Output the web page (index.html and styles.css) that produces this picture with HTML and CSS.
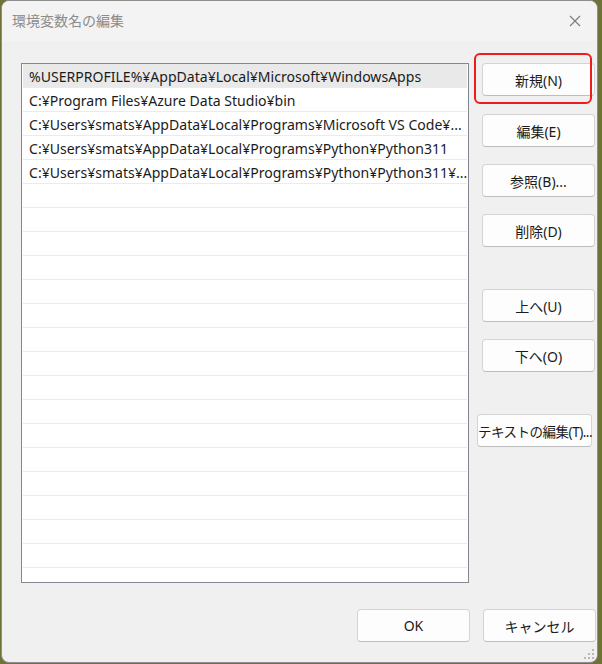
FILE: index.html
```html
<!DOCTYPE html>
<html lang="ja">
<head>
    <meta charset="UTF-8">
    <title>環境変数名の編集</title>
    <link rel="stylesheet" href="styles.css">
</head>
<body>
    <div class="window">
        <div class="titlebar">
            <span class="title">環境変数名の編集</span>
            <svg class="close" width="12" height="12" viewBox="0 0 12 12">
                <path d="M1 1 L11 11 M11 1 L1 11" stroke="#7a7a7a" stroke-width="1.1" fill="none"/>
            </svg>
        </div>

        <div class="content">
            <div class="list">
                <div class="row selected">%USERPROFILE%¥AppData¥Local¥Microsoft¥WindowsApps</div>
                <div class="row">C:¥Program Files¥Azure Data Studio¥bin</div>
                <div class="row">C:¥Users¥smats¥AppData¥Local¥Programs¥Microsoft VS Code¥...</div>
                <div class="row">C:¥Users¥smats¥AppData¥Local¥Programs¥Python¥Python311</div>
                <div class="row">C:¥Users¥smats¥AppData¥Local¥Programs¥Python¥Python311¥...</div>
                <div class="row"></div>
                <div class="row"></div>
                <div class="row"></div>
                <div class="row"></div>
                <div class="row"></div>
                <div class="row"></div>
                <div class="row"></div>
                <div class="row"></div>
                <div class="row"></div>
                <div class="row"></div>
                <div class="row"></div>
                <div class="row"></div>
                <div class="row"></div>
                <div class="row"></div>
                <div class="row"></div>
                <div class="row"></div>
                <div class="row"></div>
            </div>

            <div class="side">
                <div class="highlight-wrap">
                    <button class="btn">新規(N)</button>
                    <span class="highlight"></span>
                </div>
                <button class="btn">編集(E)</button>
                <button class="btn">参照(B)...</button>
                <button class="btn">削除(D)</button>
                <button class="btn group">上へ(U)</button>
                <button class="btn">下へ(O)</button>
                <button class="btn group wide">テキストの編集(T)...</button>
            </div>
        </div>

        <div class="footer">
            <button class="btn">OK</button>
            <button class="btn">キャンセル</button>
        </div>

        <svg class="grip" width="12" height="12" viewBox="0 0 12 12">
            <rect x="8" y="0" width="2" height="2" fill="#b8b8b8"/>
            <rect x="4" y="4" width="2" height="2" fill="#b8b8b8"/>
            <rect x="8" y="4" width="2" height="2" fill="#b8b8b8"/>
            <rect x="0" y="8" width="2" height="2" fill="#b8b8b8"/>
            <rect x="4" y="8" width="2" height="2" fill="#b8b8b8"/>
            <rect x="8" y="8" width="2" height="2" fill="#b8b8b8"/>
        </svg>
    </div>
</body>
</html>
```

FILE: styles.css
```css
body {
    margin: 0;
    width: 602px;
    height: 664px;
    background: #6f7236;
    font-family: "Noto Sans", "Noto Sans CJK JP", sans-serif;
    font-size: 14px;
    color: #1b1b1b;
    overflow: hidden;
}

.window {
    position: relative;
    box-sizing: border-box;
    width: 597px;
    height: 663px;
    margin-left: 1px;
    border: 1px solid #8e8e8e;
    border-radius: 8px;
    background: #f0f0f0;
    display: flex;
    flex-direction: column;
}

.titlebar {
    height: 40px;
    display: flex;
    align-items: center;
    justify-content: space-between;
    padding: 0 12px 0 10px;
    background: #f3f3f3;
    border-radius: 8px 8px 0 0;
}

.title {
    color: #8c8c8c;
    font-size: 14px;
    padding-bottom: 2px;
}

.close {
    margin-right: 4px;
}

.content {
    display: flex;
    padding: 22px 0 0 19px;
}

.list {
    box-sizing: border-box;
    width: 448px;
    height: 520px;
    border: 1px solid #828790;
    background: #fff;
    overflow: hidden;
}

.row {
    box-sizing: border-box;
    height: 24px;
    line-height: 25px;
    padding-left: 6px;
    margin: 0 1px;
    border-bottom: 1px solid #ebebeb;
    font-size: 14.05px;
    white-space: nowrap;
    overflow: hidden;
}

.row.selected {
    background: #e9e9e9;
}

.side {
    display: flex;
    flex-direction: column;
    gap: 17px;
    margin-left: 13px;
}

.btn {
    box-sizing: border-box;
    width: 113px;
    height: 33px;
    border: 1px solid #d4d4d4;
    border-bottom-color: #bdbdbd;
    border-radius: 4px;
    background: #fdfdfd;
    font-family: "Noto Sans", "Noto Sans CJK JP", sans-serif;
    font-size: 14px;
    color: #1b1b1b;
    padding: 0;
    white-space: nowrap;
}

.btn.group {
    margin-top: 25px;
}

.btn.wide {
    width: 115px;
    margin-left: -5px;
    font-size: 13.5px;
    letter-spacing: -0.5px;
}

.highlight-wrap {
    position: relative;
    height: 34px;
}

.highlight {
    position: absolute;
    left: -8px;
    top: -10px;
    width: 118px;
    height: 51px;
    box-sizing: border-box;
    border: 2px solid #ee1c1c;
    border-radius: 6px;
}

.footer {
    display: flex;
    justify-content: flex-end;
    gap: 13px;
    margin-top: 26px;
    padding-right: 1px;
}

.grip {
    position: absolute;
    right: 1px;
    bottom: 1px;
}
```
